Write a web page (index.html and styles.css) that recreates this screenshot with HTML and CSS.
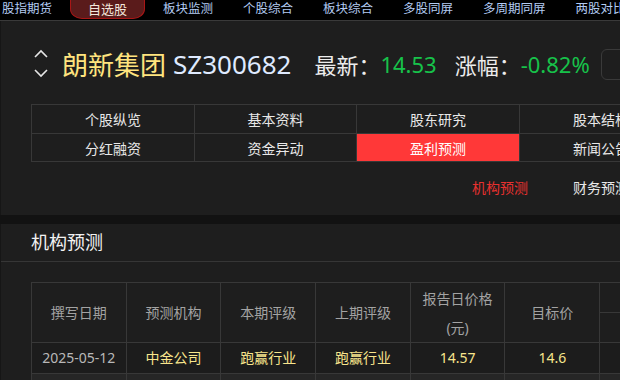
FILE: index.html
```html
<!DOCTYPE html>
<html lang="zh-CN">

<head>
    <meta charset="UTF-8">
    <meta name="viewport" content="width=device-width, initial-scale=1.0">
    <title>朗新集团 - 盈利预测</title>
    <link rel="stylesheet" href="styles.css">
</head>

<body>
    <div class="top-nav">
        <a class="nav-item">股指期货</a>
        <a class="nav-item active">自选股</a>
        <a class="nav-item">板块监测</a>
        <a class="nav-item">个股综合</a>
        <a class="nav-item">板块综合</a>
        <a class="nav-item">多股同屏</a>
        <a class="nav-item">多周期同屏</a>
        <a class="nav-item">两股对比</a>
    </div>

    <div class="panel stock-panel">
        <div class="quote-row">
            <svg class="switch-icon" width="16" height="30" viewBox="0 0 16 30">
                <polyline points="2,8 8,2 14,8" fill="none" stroke="#e6e6e6" stroke-width="1.6" />
                <polyline points="2,21 8,27 14,21" fill="none" stroke="#e6e6e6" stroke-width="1.6" />
            </svg>
            <span class="stock-name">朗新集团</span>
            <span class="stock-code">SZ300682</span>
            <span class="quote-label">最新：</span><span class="quote-value">14.53</span>
            <span class="quote-label label-gap">涨幅：</span><span class="quote-value">-0.82%</span>
            <div class="search-box"></div>
        </div>

        <div class="tab-grid">
            <div class="tab-cell">个股纵览</div>
            <div class="tab-cell">基本资料</div>
            <div class="tab-cell">股东研究</div>
            <div class="tab-cell">股本结构</div>
            <div class="tab-cell">分红融资</div>
            <div class="tab-cell">资金异动</div>
            <div class="tab-cell selected">盈利预测</div>
            <div class="tab-cell">新闻公告</div>
        </div>

        <div class="sub-tabs">
            <span class="sub-tab current">机构预测</span>
            <span class="sub-tab">财务预测</span>
        </div>
    </div>

    <div class="panel forecast-panel">
        <div class="panel-title">机构预测</div>
        <table class="forecast-table">
            <thead>
                <tr>
                    <th rowspan="2">撰写日期</th>
                    <th rowspan="2">预测机构</th>
                    <th rowspan="2">本期评级</th>
                    <th rowspan="2">上期评级</th>
                    <th rowspan="2">报告日价格<br>(元)</th>
                    <th rowspan="2">目标价</th>
                    <th class="group-head">每股收益</th>
                </tr>
                <tr>
                    <th class="group-sub">2025</th>
                </tr>
            </thead>
            <tbody>
                <tr>
                    <td class="date">2025-05-12</td>
                    <td>中金公司</td>
                    <td>跑赢行业</td>
                    <td>跑赢行业</td>
                    <td>14.57</td>
                    <td>14.6</td>
                    <td></td>
                </tr>
                <tr class="alt">
                    <td class="date">2025-04-28</td>
                    <td>华泰证券</td>
                    <td>买入</td>
                    <td>买入</td>
                    <td>15.02</td>
                    <td>18.3</td>
                    <td></td>
                </tr>
            </tbody>
        </table>
    </div>
</body>

</html>
```

FILE: styles.css
```css
body {
    margin: 0;
    padding: 0;
    width: 620px;
    height: 380px;
    overflow: hidden;
    background-color: #121212;
    font-family: "Noto Sans", "Noto Sans CJK SC", sans-serif;
    color: #e6e6e6;
}

.top-nav {
    display: flex;
    align-items: center;
    height: 20px;
    background-color: #000;
    border-bottom: 1px solid #3a3a3a;
    margin-left: -13px;
    white-space: nowrap;
}

.nav-item {
    flex-shrink: 0;
    padding: 0 15px;
    font-size: 12.5px;
    line-height: 17px;
    margin-top: -3px;
    color: #b3cbf2;
}

.nav-item.active {
    margin: -6px 3px 0;
    padding: 4px 17px 0;
    font-size: 13px;
    line-height: 17px;
    background-color: #5a1b1b;
    border: 1px solid #a81616;
    border-radius: 0 0 12px 12px / 0 0 10px 10px;
    color: #f3e6dc;
}

.panel {
    background-color: #1e1e1e;
    border-left: 1px solid #161616;
    overflow: hidden;
}

.stock-panel {
    height: 194px;
}

.quote-row {
    display: flex;
    align-items: center;
    height: 44px;
    margin-top: 21px;
    padding-left: 32px;
    white-space: nowrap;
}

.switch-icon {
    flex-shrink: 0;
    margin-right: 13px;
}

.stock-name {
    font-size: 26px;
    color: #ffe47e;
    margin-right: 7px;
}

.stock-code {
    font-size: 26px;
    color: #dfeaff;
    margin-right: 23px;
}

.quote-label {
    font-size: 22px;
    color: #ececec;
}

.label-gap {
    margin-left: 18px;
}

.quote-value {
    font-size: 22px;
    color: #17c24a;
}

.search-box {
    flex-shrink: 0;
    width: 120px;
    height: 29px;
    margin-left: 11px;
    border: 1px solid #3a3a3a;
    border-radius: 6px;
}

.tab-grid {
    display: grid;
    grid-template-columns: 163px 162px 163px 163px;
    grid-template-rows: 29px 28px;
    width: 652px;
    margin: 18px 0 0 30px;
    border-top: 1px solid #383838;
    border-left: 1px solid #383838;
}

.tab-cell {
    display: flex;
    align-items: center;
    justify-content: center;
    font-size: 14px;
    color: #e8e8e8;
    border-right: 1px solid #383838;
    border-bottom: 1px solid #383838;
    white-space: nowrap;
}

.tab-cell.selected {
    background-color: #ff3838;
    color: #fff;
}

.sub-tabs {
    display: flex;
    gap: 45px;
    margin-top: 11px;
    padding-left: 471px;
    white-space: nowrap;
}

.sub-tab {
    flex-shrink: 0;
    font-size: 14px;
    line-height: 30px;
    color: #e8e8e8;
}

.sub-tab.current {
    color: #e8312f;
}

.forecast-panel {
    margin-top: 9px;
    height: 160px;
}

.panel-title {
    height: 37px;
    line-height: 37px;
    padding-left: 30px;
    font-size: 18px;
    color: #f2f2f2;
    border-bottom: 1px solid #363636;
}

.forecast-table {
    margin: 20px 0 0 30px;
    border-collapse: collapse;
    table-layout: fixed;
    width: 680px;
}

.forecast-table th,
.forecast-table td {
    width: 94px;
    padding: 0;
    border: 1px solid #383838;
    text-align: center;
    font-size: 14px;
    font-weight: normal;
    white-space: nowrap;
    box-sizing: border-box;
}

.forecast-table th {
    height: 29px;
    line-height: 29px;
    color: #a3a3a3;
}

.forecast-table th.group-head,
.forecast-table th.group-sub {
    width: 110px;
    color: transparent;
}

.forecast-table td {
    height: 30px;
    line-height: 30px;
    color: #f8e58c;
    background-color: #1c1c1c;
}

.forecast-table td.date {
    color: #b8b8b8;
}

.forecast-table tr.alt td {
    background-color: #262626;
}
```
